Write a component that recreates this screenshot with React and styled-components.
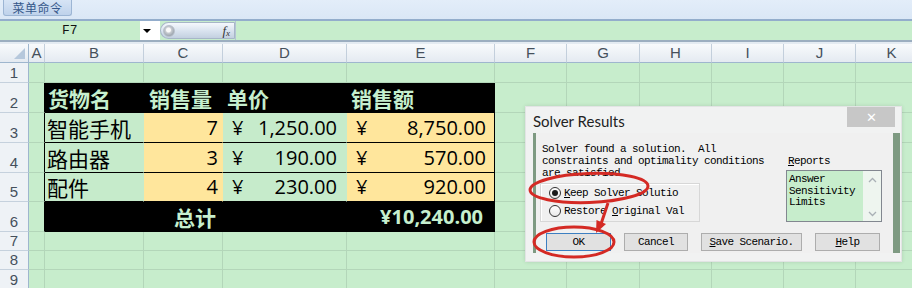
import React from "react";
import styled, { createGlobalStyle, css } from "styled-components";

const GREEN = "#C7EDCC";
const GRID = "#B3D6B9";
const YELLOW = "#FFE69C";
const LIGHT = "#C6EFCE";

const Global = createGlobalStyle`
  html, body { margin: 0; padding: 0; background: ${GREEN}; overflow: hidden; }
  * { box-sizing: border-box; }
`;

const Page = styled.div`
  position: relative;
  width: 912px;
  height: 288px;
  overflow: hidden;
  background: ${GREEN};
  font-family: "Liberation Sans", Arial, sans-serif;
`;

const TopBar = styled.div`
  height: 21px;
  display: flex;
  align-items: flex-start;
  padding-left: 3px;
  background: linear-gradient(#E3EDF9, #DAE7F6);
  border-bottom: 2px solid #93ADCC;
`;

const MenuButton = styled.div`
  width: 69px;
  height: 16px;
  border: 1px solid #9CB5D4;
  border-top: none;
  border-radius: 0 0 3px 3px;
  background: linear-gradient(#D6E4F5, #BFD2EB);
  color: #35578A;
  font: 12px/15px "Noto Sans CJK SC", sans-serif;
  text-align: center;
  letter-spacing: 0.5px;
`;

const FormulaBar = styled.div`
  height: 19px;
  display: flex;
  align-items: stretch;
`;

const NameBox = styled.div`
  width: 140px;
  padding-left: 62px;
  font: 13px/19px "Liberation Mono", monospace;
  color: #111;
`;

const DropButton = styled.div`
  width: 20px;
  background: #fff;
  display: flex;
  align-items: center;
  justify-content: center;
  padding-right: 6px;
  &::after {
    content: "";
    border-left: 4px solid transparent;
    border-right: 4px solid transparent;
    border-top: 4px solid #000;
  }
`;

const FxPill = styled.div`
  width: 75px;
  margin: 1px 0;
  border: 1px solid #A7B6C8;
  border-radius: 9px 1px 1px 9px;
  background: linear-gradient(#F5F8FC, #D8E2EE 55%, #C3D0E0);
  display: flex;
  align-items: center;
  justify-content: space-between;
  padding: 0 4px 0 2px;
`;

const Knob = styled.span`
  width: 12px;
  height: 12px;
  border-radius: 50%;
  background: radial-gradient(circle at 45% 40%, #FAFAFA 0 2px, #C9CDD2 3px, #9AA3AD 6px);
  border: 1px solid #B8C0CA;
`;

const Fx = styled.span`
  font: italic 13px "Liberation Serif", serif;
  color: #333;
  & sub { font-size: 9px; vertical-align: -1px; }
`;

const FormulaInput = styled.div`
  flex: 1;
  border-left: 1px solid #B5C4D4;
`;

const Divider = styled.div`
  height: 4px;
  background: linear-gradient(#9CAEC0 0 2px, #E4EBF2 2px 4px);
`;

const COLS = [29, 16, 99, 79, 124, 148, 72, 73, 72, 72, 72, 72];
const ROWS = [19, 20, 30, 30, 30, 29, 30, 19, 19, 20];
const LETTERS = ["A", "B", "C", "D", "E", "F", "G", "H", "I", "J", "K"];

const Sheet = styled.div`
  display: grid;
  grid-template-columns: ${COLS.map((c) => c + "px").join(" ")};
  grid-template-rows: ${ROWS.map((r) => r + "px").join(" ")};
`;

const ColHead = styled.div`
  background: linear-gradient(#F8FAFC, #E4EAF1);
  border-right: 1px solid #C3CFDC;
  border-bottom: 1px solid #9EB6CE;
  color: #45505C;
  font: 15px/18px "Liberation Sans", sans-serif;
  text-align: center;
  position: relative;
  ${(p) =>
    p.$corner &&
    css`
      border-right-color: #9EB6CE;
      &::after {
        content: "";
        position: absolute;
        right: 3px;
        bottom: 3px;
        border-left: 11px solid transparent;
        border-bottom: 11px solid #B6C8DC;
      }
    `}
`;

const RowHead = styled.div`
  background: #EEF2F6;
  border-right: 1px solid #9EB6CE;
  border-bottom: 1px solid #C5D1DD;
  color: #45505C;
  font: 15px/17px "Liberation Sans", sans-serif;
  display: flex;
  align-items: flex-end;
  justify-content: center;
  padding-bottom: 1px;
`;

const TONES = {
  plain: { bg: GREEN, right: GRID, bottom: GRID },
  black: { bg: "#000", right: "#000", bottom: "#000" },
  green: { bg: "#C6EBCB", right: "#C6EBCB", bottom: "#000" },
  yellow: { bg: YELLOW, right: YELLOW, bottom: "#000" },
};

const Cell = styled.div`
  background: ${(p) => TONES[p.$tone].bg};
  border-right: 1px solid ${(p) => (p.$edge ? "#000" : TONES[p.$tone].right)};
  border-bottom: 1px solid ${(p) => TONES[p.$tone].bottom};
  display: flex;
  align-items: center;
  justify-content: ${(p) => p.$justify || "flex-start"};
  padding: 0 ${(p) => p.$pr || 0}px 0 ${(p) => p.$pl || 0}px;
  overflow: hidden;
  white-space: nowrap;
`;

const HeadText = styled.span`
  font: bold 21px/28px "Noto Sans CJK SC", sans-serif;
  color: ${LIGHT};
`;

const LabelText = styled.span`
  font: 21px/28px "Noto Sans CJK SC", sans-serif;
  color: #000;
`;

const Num = styled.span`
  font: ${(p) => (p.$bold ? "bold " : "")}20px/28px "Open Sans", "Noto Sans CJK SC", sans-serif;
  color: ${(p) => (p.$light ? LIGHT : "#000")};
`;

const DIALOG_FONT = `"Liberation Mono", monospace`;

const Dialog = styled.div`
  position: absolute;
  left: 525px;
  top: 106px;
  width: 377px;
  height: 156px;
  background: #F1F2F2;
  border: 1px solid #E2E4E4;
  box-shadow: 0 0 4px rgba(0, 0, 0, 0.12);
`;

const TitleBar = styled.div`
  height: 26px;
  display: flex;
  align-items: flex-start;
  justify-content: space-between;
  padding: 0 6px 0 7px;
`;

const Title = styled.div`
  font: 15px/26px Lato, "Liberation Sans", sans-serif;
  color: #222;
  padding-top: 1px;
`;

const CloseButton = styled.div`
  width: 48px;
  height: 20px;
  background: #C7C7C7;
  color: #fff;
  display: flex;
  align-items: center;
  justify-content: center;
  font: 13px "Liberation Sans", sans-serif;
`;

const Client = styled.div`
  margin: 0 1px 0 7px;
  height: 120px;
  background: #F0F0F0;
  border-left: 3px solid #7E9A82;
  border-right: 7px solid #7E9A82;
  display: grid;
  grid-template-columns: 1fr 96px;
  grid-template-rows: auto auto;
  padding: 10px 11px 0 4px;
  font: 11px/12px ${DIALOG_FONT};
  letter-spacing: -0.6px;
  color: #000;
`;

const LeftCol = styled.div`
  display: flex;
  flex-direction: column;
`;

const Message = styled.div`
  padding-left: 2px;
  white-space: pre;
`;

const GroupBox = styled.div`
  margin-top: 4px;
  width: 160px;
  height: 39px;
  border: 1px solid #D7D7D7;
  box-shadow: inset 1px 1px 0 #fff;
  padding-left: 8px;
  display: flex;
  flex-direction: column;
`;

const RadioRow = styled.div`
  height: 18px;
  display: flex;
  align-items: center;
  gap: 3px;
  white-space: pre;
`;

const RadioDot = styled.span`
  width: 12px;
  height: 12px;
  border-radius: 50%;
  border: 1px solid #333;
  background: linear-gradient(#fff, #E8E8E8);
  display: flex;
  align-items: center;
  justify-content: center;
  &::after {
    content: "";
    width: 6px;
    height: 6px;
    border-radius: 50%;
    background: ${(p) => (p.$on ? "#1A1A1A" : "transparent")};
  }
`;

const RightCol = styled.div`
  display: flex;
  flex-direction: column;
  padding-top: 12px;
`;

const ReportsLabel = styled.div`
  padding-left: 2px;
`;

const ListBox = styled.div`
  margin-top: 3px;
  height: 52px;
  border: 1px solid #828790;
  background: ${GREEN};
  display: flex;
`;

const ListItems = styled.div`
  flex: 1;
  padding: 3px 0 0 2px;
  line-height: 11.5px;
`;

const ScrollTrack = styled.div`
  width: 18px;
  background: #EEF5EF;
  display: flex;
  flex-direction: column;
  justify-content: space-between;
  align-items: center;
  padding: 6px 0 4px;
`;

const ButtonRow = styled.div`
  grid-column: 1 / span 2;
  margin-top: 9px;
  padding-left: 6px;
  display: flex;
  gap: 13px;
`;

const DlgButton = styled.div`
  width: ${(p) => p.$w}px;
  height: 18px;
  border: 1px solid ${(p) => (p.$default ? "#3D7FC1" : "#ADADAD")};
  background: #E1E1E1;
  display: flex;
  align-items: center;
  justify-content: center;
  white-space: pre;
`;

const Annotations = styled.svg`
  position: absolute;
  left: 0;
  top: 0;
  pointer-events: none;
`;

const Chevron = ({ up }) => (
  <svg width="9" height="6" viewBox="0 0 9 6">
    <path
      d={up ? "M1 5 L4.5 1.5 L8 5" : "M1 1 L4.5 4.5 L8 1"}
      fill="none"
      stroke="#A9B0B5"
      strokeWidth="1.3"
    />
  </svg>
);

const items = [
  { name: "智能手机", qty: "7", price: "1,250.00", total: "8,750.00" },
  { name: "路由器", qty: "3", price: "190.00", total: "570.00" },
  { name: "配件", qty: "4", price: "230.00", total: "920.00" },
];

function plainRow(r, from) {
  return LETTERS.slice(from).map((l) => <Cell key={l + r} $tone="plain" />);
}

export default function App() {
  const cells = [];
  cells.push(<ColHead key="corner" $corner />);
  LETTERS.forEach((l) => cells.push(<ColHead key={"h" + l}>{l}</ColHead>));

  cells.push(<RowHead key="r1">1</RowHead>);
  cells.push(...plainRow(1, 0));

  cells.push(<RowHead key="r2">2</RowHead>);
  cells.push(<Cell key="A2" $tone="plain" $edge />);
  cells.push(
    <Cell key="B2" $tone="black" $pl={3}><HeadText>货物名</HeadText></Cell>,
    <Cell key="C2" $tone="black" $pl={5}><HeadText>销售量</HeadText></Cell>,
    <Cell key="D2" $tone="black" $pl={4}><HeadText>单价</HeadText></Cell>,
    <Cell key="E2" $tone="black" $pl={4}><HeadText>销售额</HeadText></Cell>
  );
  cells.push(...plainRow(2, 5));

  items.forEach((it, i) => {
    const r = i + 3;
    cells.push(<RowHead key={"r" + r}>{r}</RowHead>);
    cells.push(<Cell key={"A" + r} $tone="plain" $edge />);
    cells.push(
      <Cell key={"B" + r} $tone="green" $pl={2}><LabelText>{it.name}</LabelText></Cell>,
      <Cell key={"C" + r} $tone="yellow" $justify="flex-end" $pr={4}><Num>{it.qty}</Num></Cell>,
      <Cell key={"D" + r} $tone="green" $justify="space-between" $pl={9} $pr={9}>
        <Num>¥</Num><Num>{it.price}</Num>
      </Cell>,
      <Cell key={"E" + r} $tone="yellow" $edge $justify="space-between" $pl={9} $pr={8}>
        <Num>¥</Num><Num>{it.total}</Num>
      </Cell>
    );
    cells.push(...plainRow(r, 5));
  });

  cells.push(<RowHead key="r6">6</RowHead>);
  cells.push(<Cell key="A6" $tone="plain" $edge />);
  cells.push(
    <Cell key="B6" $tone="black" />,
    <Cell key="C6" $tone="black" $justify="flex-end" $pr={6}><HeadText>总计</HeadText></Cell>,
    <Cell key="D6" $tone="black" />,
    <Cell key="E6" $tone="black" $justify="flex-end" $pr={11}><Num $bold $light>¥10,240.00</Num></Cell>
  );
  cells.push(...plainRow(6, 5));

  [7, 8, 9].forEach((r) => {
    cells.push(<RowHead key={"r" + r}>{r}</RowHead>);
    cells.push(...plainRow(r, 0));
  });

  return (
    <Page>
      <Global />
      <TopBar>
        <MenuButton>菜单命令</MenuButton>
      </TopBar>
      <FormulaBar>
        <NameBox>F7</NameBox>
        <DropButton />
        <FxPill>
          <Knob />
          <Fx>f<sub>x</sub></Fx>
        </FxPill>
        <FormulaInput />
      </FormulaBar>
      <Divider />
      <Sheet>{cells}</Sheet>

      <Dialog>
        <TitleBar>
          <Title>Solver Results</Title>
          <CloseButton>✕</CloseButton>
        </TitleBar>
        <Client>
          <LeftCol>
            <Message>{"Solver found a solution.  All\nconstraints and optimality conditions\nare satisfied."}</Message>
            <GroupBox>
              <RadioRow>
                <RadioDot $on />
                <span><u>K</u>eep Solver Solutio</span>
              </RadioRow>
              <RadioRow>
                <RadioDot />
                <span>Restore <u>O</u>riginal Val</span>
              </RadioRow>
            </GroupBox>
          </LeftCol>
          <RightCol>
            <ReportsLabel><u>R</u>eports</ReportsLabel>
            <ListBox>
              <ListItems>
                <div>Answer</div>
                <div>Sensitivity</div>
                <div>Limits</div>
              </ListItems>
              <ScrollTrack>
                <Chevron up />
                <Chevron />
              </ScrollTrack>
            </ListBox>
          </RightCol>
          <ButtonRow>
            <DlgButton $w={65} $default>OK</DlgButton>
            <DlgButton $w={64}>Cancel</DlgButton>
            <DlgButton $w={101}><span><u>S</u>ave Scenario.</span></DlgButton>
            <DlgButton $w={65}><span><u>H</u>elp</span></DlgButton>
          </ButtonRow>
        </Client>
      </Dialog>

      <Annotations width="912" height="288" viewBox="0 0 912 288">
        <ellipse cx="589" cy="188" rx="59" ry="14.5" fill="none" stroke="#D42A24" strokeWidth="3" transform="rotate(-2 589 188)" />
        <ellipse cx="574" cy="242" rx="40" ry="15" fill="none" stroke="#D42A24" strokeWidth="3" />
        <path d="M608 203 L601 224" stroke="#D42A24" strokeWidth="3" fill="none" />
        <path d="M596 233 L596.5 220 L606 224 Z" fill="#D42A24" />
      </Annotations>
    </Page>
  );
}
